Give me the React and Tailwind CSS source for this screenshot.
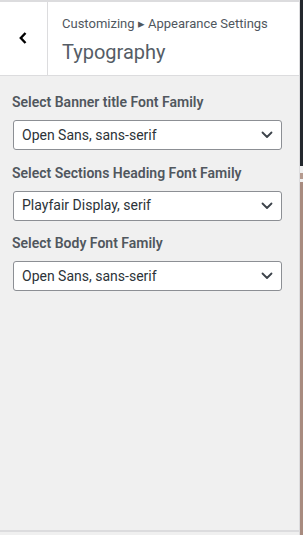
export default function App() {
  const Chevron = () => (
    <svg width="12" height="8" viewBox="0 0 12 8" className="shrink-0">
      <path d="M1.5 1.5 L6 6 L10.5 1.5" fill="none" stroke="#3c434a" strokeWidth="1.8" strokeLinecap="round" strokeLinejoin="round" />
    </svg>
  );
  const Field = ({ label, value }) => (
    <div className="flex flex-col gap-2">
      <div className="text-[14px] leading-5 font-semibold text-[#50575e]">{label}</div>
      <div className="mr-[17px] ml-[1px] h-[30px] bg-white border border-[#8c8f94] rounded-[3px] flex items-center justify-between pl-2 pr-[8px]">
        <span className="text-[14px] text-[#2c3338]">{value}</span>
        <Chevron />
      </div>
    </div>
  );
  return (
    <div className="w-[303px] h-[535px] flex overflow-hidden" style={{ fontFamily: "Roboto, 'Liberation Sans', sans-serif" }}>
      <div className="w-[300px] h-full flex flex-col bg-[#f0f0f0] border-r border-[#dcdcde]">
        <div className="h-[76px] shrink-0 bg-white border-t-2 border-b border-[#dcdcde] flex">
          <div className="w-[48px] border-r border-[#dcdcde] flex items-center justify-center">
            <svg width="10" height="14" viewBox="0 0 10 14" className="-mt-[2px] -ml-[2px]">
              <path d="M7.5 2 L2.8 7 L7.5 12" fill="none" stroke="#000" strokeWidth="2.4" strokeLinejoin="miter" />
            </svg>
          </div>
          <div className="pl-[14px] flex flex-col pt-[13px]">
            <div className="text-[13px] leading-[18px] text-[#50575e]">Customizing ▸ Appearance Settings</div>
            <div className="text-[20px] leading-[28px] text-[#555d66] mt-[5px]">Typography</div>
          </div>
        </div>
        <div className="flex-1 flex flex-col gap-[12.5px] pl-3 pt-[16px]">
          <Field label="Select Banner title Font Family" value="Open Sans, sans-serif" />
          <Field label="Select Sections Heading Font Family" value="Playfair Display, serif" />
          <Field label="Select Body Font Family" value="Open Sans, sans-serif" />
        </div>
        <div className="h-[5px] shrink-0 border-t-2 border-[#dcdcde]" />
      </div>
      <div className="w-[3px] h-full flex flex-col">
        <div className="h-[166px] bg-[#23282d]" />
        <div className="h-[16px] bg-[#f0f0f0] flex items-center pt-[4px]">
          <div className="w-[3px] h-[6px] bg-[#b59a8e]" />
        </div>
        <div className="flex-1 bg-[#a88b7f]" />
      </div>
    </div>
  );
}
